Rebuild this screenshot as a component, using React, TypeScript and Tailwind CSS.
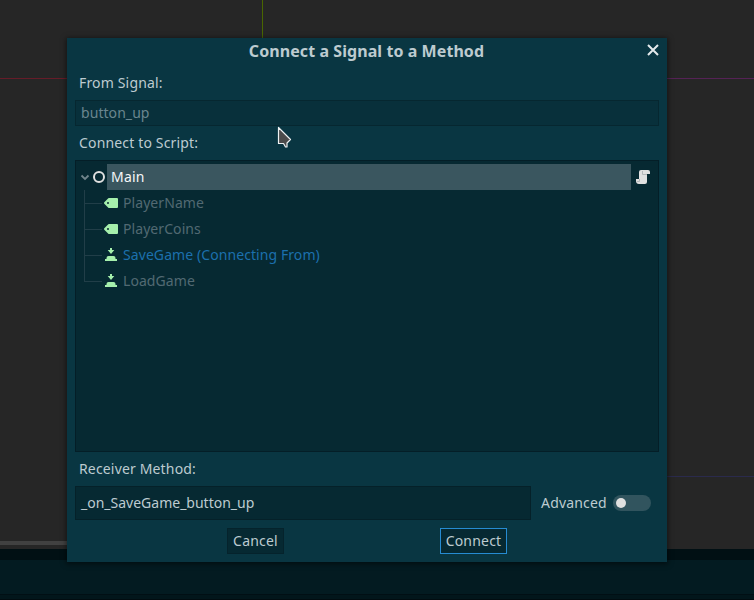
import React from "react";

type NodeKind = "label" | "button";

interface TreeNode {
  name: string;
  kind: NodeKind;
  source?: boolean;
}

const nodes: TreeNode[] = [
  { name: "PlayerName", kind: "label" },
  { name: "PlayerCoins", kind: "label" },
  { name: "SaveGame (Connecting From)", kind: "button", source: true },
  { name: "LoadGame", kind: "button" },
];

function LabelIcon() {
  return (
    <svg width="16" height="16" viewBox="0 0 16 16" fill="#a5efac">
      <path fillRule="evenodd" d="M6 3a1 1 0 0 0-.7.3l-4 4a1 1 0 0 0 0 1.4l4 4a1 1 0 0 0 .7.3h8a1 1 0 0 0 1-1V4a1 1 0 0 0-1-1zM5 7a1 1 0 0 1 0 2 1 1 0 0 1 0-2z" />
    </svg>
  );
}

function ButtonIcon() {
  return (
    <svg width="16" height="16" viewBox="0 0 16 16" fill="#a5efac">
      <path d="M7 1v2H4.700L8 7l3.300-4H9V1zM5.500 9a2 2 0 0 0-2 2v1H2v2h12v-2h-1.500v-1a2 2 0 0 0-2-2z" />
    </svg>
  );
}

function ScriptIcon() {
  return (
    <svg width="16" height="16" viewBox="0 0 16 16">
      <path fill="#e0e0e0" d="M6 1a2 2 0 0 0-2 2v7H1v2a3 3 0 0 0 3 3h6a2 2 0 0 0 2-2V5h3V3a2 2 0 0 0-2-2z" />
      <path fill="none" stroke="#b4b8ba" d="M7.500 2v3.500H12M4.500 10v2.500H2" />
    </svg>
  );
}

function TreeRow({ node, last }: { node: TreeNode; last: boolean }) {
  return (
    <div className="flex h-[26px] items-center">
      <div className="ml-[4px] flex h-[26px] w-[23px] flex-col">
        <div className="ml-[4px] h-[14px] w-[18px] border-b border-l border-[#213e48]" />
        <div className={last ? "h-[12px]" : "ml-[4px] h-[12px] border-l border-[#213e48]"} />
      </div>
      {node.kind === "label" ? <LabelIcon /> : <ButtonIcon />}
      <span className={node.source ? "ml-[4px] tracking-[0.08px] text-[#1c70ad]" : "ml-[4px] tracking-[0.07px] text-[#526972]"}>{node.name}</span>
    </div>
  );
}

function FieldLabel({ children }: { children: React.ReactNode }) {
  return <label className="flex h-[34px] items-center pl-1 tracking-[0.16px]">{children}</label>;
}

function ConnectDialog() {
  return (
    <section className="absolute left-[67px] top-[38px] flex h-[524px] w-[600px] flex-col bg-[#093642] px-2 shadow-[0_1px_5px_1px_rgba(0,0,0,0.5)]">
      <header className="grid h-[28px] grid-cols-[20px_1fr_20px] items-start">
        <span />
        <h1 className="-ml-[1px] text-center text-[16px] font-bold leading-[26px] tracking-[0.07px] text-[#bdcbd0]">Connect a Signal to a Method</h1>
        <button className="flex h-[24px] items-center justify-center pl-[8px]" aria-label="Close">
          <svg width="12" height="12" viewBox="0 0 12 12" stroke="#e4e9eb" strokeWidth="2">
            <path d="M1 1l10 10M11 1L1 11" />
          </svg>
        </button>
      </header>

      <FieldLabel>From Signal:</FieldLabel>
      <div className="flex h-[26px] shrink-0 items-center border border-[#062730] bg-[#08303b] pl-[5px] tracking-[0.06px] text-[#6a868f]">button_up</div>
      <FieldLabel>Connect to Script:</FieldLabel>

      <div className="flex h-[292px] shrink-0 flex-col border border-[#041e27] bg-[#062932] pt-[3px]">
        <div className="flex h-[26px] items-center">
          <svg className="ml-[4px]" width="10" height="10" viewBox="0 0 10 10" fill="none" stroke="#70858c" strokeWidth="1.800">
            <path d="M1.500 3.500L5 7l3.500-3.500" />
          </svg>
          <svg className="ml-[1px]" width="16" height="16" viewBox="0 0 16 16" fill="none" stroke="#e0e0e0" strokeWidth="2">
            <circle cx="8" cy="8" r="5" />
          </svg>
          <div className="flex h-[26px] w-[524px] items-center bg-[#3a565f] pl-1 tracking-[0.2px] text-[#f5f7f8]">Main</div>
          <span className="ml-[4px] flex"><ScriptIcon /></span>
        </div>
        {nodes.map((node, i) => (
          <TreeRow key={node.name} node={node} last={i === nodes.length - 1} />
        ))}
      </div>

      <FieldLabel>Receiver Method:</FieldLabel>
      <div className="flex h-[34px] shrink-0 items-center">
        <div className="flex h-[34px] w-[456px] items-center border border-[#052129] bg-[#062932] pl-[5px]">_on_SaveGame_button_up</div>
        <span className="ml-[10px] w-[72px] tracking-[0.18px]">Advanced</span>
        <span className="flex h-[16px] w-[38px] items-center rounded-full bg-[#31545e] pl-[3px]">
          <span className="size-[10px] rounded-full bg-[#e0e0e0]" />
        </span>
      </div>

      <footer className="mt-2 flex h-[26px] pl-[152px]">
        <button className="h-[26px] w-[57px] border border-[#05232c] bg-[#062932] tracking-[0.2px]">Cancel</button>
        <button className="ml-[156px] h-[26px] w-[67px] border border-[#268bd2] bg-[#062932] tracking-[0.2px]">Connect</button>
      </footer>
    </section>
  );
}

export default function App() {
  return (
    <main className="relative flex h-[600px] w-[754px] flex-col overflow-hidden bg-[#262626] font-['Noto_Sans','Open_Sans',sans-serif] text-[14px] leading-[20px] text-[#bdcbd0]">
      <div className="flex h-[549px] flex-col">
        <div className="ml-[262px] h-[78px] w-px bg-[#496600]" />
        <div className="flex h-px">
          <div className="w-[262px] bg-[#661c28]" />
          <div className="flex-1 bg-[#552255]" />
        </div>
        <div className="mt-[397px] ml-[262px] h-px bg-[#2a2a4c]" />
        <div className="mt-[64px] h-[4px] w-[262px] bg-[#414141]" />
      </div>
      <div className="h-[11px] bg-[#011014]" />
      <div className="h-[34px] bg-[#031b21]" />
      <div className="h-px bg-[#010f14]" />
      <div className="h-[4px] bg-[#02161b]" />
      <div className="h-px bg-[#010c10]" />

      <ConnectDialog />

      <svg className="absolute left-[277px] top-[126px]" width="15" height="23" viewBox="0 0 15 23">
        <path d="M1.500 1.500v16h5l2 3.500h1.500v-4l3.500-3.500z" fill="#4b4b4b" stroke="#edf1f2" strokeWidth="1.200" strokeLinejoin="round" />
      </svg>
    </main>
  );
}
